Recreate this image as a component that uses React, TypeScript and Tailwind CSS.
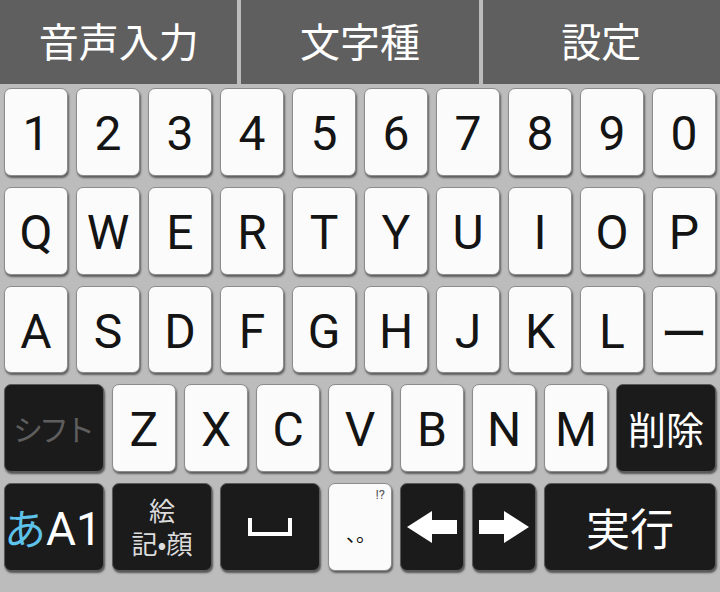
import React from "react";

const CJK = { fontFamily: '"Noto Sans CJK JP", "Noto Sans", sans-serif' };
const ROBO = { fontFamily: 'Roboto, "Noto Sans", sans-serif' };

function Key({
  w,
  dark,
  children,
  className = "",
}: {
  w: string;
  dark?: boolean;
  children?: React.ReactNode;
  className?: string;
}) {
  return (
    <div className={`${w} h-full pl-[4px] pr-[4px] pt-[4px] pb-[7px] shrink-0`}>
      <div
        className={
          "relative w-full h-full rounded-[7px] flex items-center justify-center overflow-hidden " +
          (dark
            ? "bg-[#1b1b1b] border border-[#5a5a5a] shadow-[1px_2px_2px_rgba(0,0,0,0.55)] "
            : "bg-[#fbfbfb] border border-[#8c8c8c] shadow-[1px_2px_2px_rgba(0,0,0,0.5)] ") +
          className
        }
      >
        {children}
      </div>
    </div>
  );
}

function Letter({ c }: { c: string }) {
  return (
    <Key w="w-[72px]">
      <span className="text-[48px] leading-none text-[#141414] mt-[4px]" style={ROBO}>
        {c}
      </span>
    </Key>
  );
}

export default function App() {
  const row1 = "1234567890".split("");
  const row2 = "QWERTYUIOP".split("");
  const row3 = "ASDFGHJKL".split("");
  const row4 = "ZXCVBNM".split("");
  return (
    <div className="w-[720px] h-[592px] bg-[#bcbcbc] flex flex-col overflow-hidden">
      <div className="h-[84px] grid grid-cols-3 gap-[4px] shrink-0">
        {["音声入力", "文字種", "設定"].map((t) => (
          <div
            key={t}
            className="bg-[#5f5f5f] flex items-center justify-center text-white text-[40px] leading-none pb-[4px]"
            style={CJK}
          >
            {t}
          </div>
        ))}
      </div>
      <div className="h-[99px] flex">
        {row1.map((c) => (
          <Letter key={c} c={c} />
        ))}
      </div>
      <div className="h-[99px] flex">
        {row2.map((c) => (
          <Letter key={c} c={c} />
        ))}
      </div>
      <div className="h-[98px] flex">
        {row3.map((c) => (
          <Letter key={c} c={c} />
        ))}
        <Key w="w-[72px]">
          <span className="text-[48px] leading-none text-[#141414]" style={CJK}>
            ー
          </span>
        </Key>
      </div>
      <div className="h-[99px] flex">
        <Key w="w-[108px]" dark>
          <span className="text-[30px] leading-none text-[#5e5e5e] tracking-[-4px] -ml-[4px]" style={CJK}>
            シフト
          </span>
        </Key>
        {row4.map((c) => (
          <Letter key={c} c={c} />
        ))}
        <Key w="w-[108px]" dark>
          <span className="text-[38px] leading-none text-white" style={CJK}>
            削除
          </span>
        </Key>
      </div>
      <div className="h-[99px] flex">
        <Key w="w-[108px]" dark className="!justify-start">
          <span className="text-[42px] leading-none text-[#5ec3ea] -ml-[1px]" style={CJK}>
            あ
          </span>
          <span className="text-[46px] leading-none text-white mt-[4px]" style={ROBO}>
            A1
          </span>
        </Key>
        <Key w="w-[108px]" dark>
          <div className="flex flex-col items-center text-[#dcdcdc] text-[26px] leading-[33px] -mt-[3px]" style={CJK}>
            <span className="leading-[33px]">絵</span>
            <span className="leading-[33px]">記•顔</span>
          </div>
        </Key>
        <Key w="w-[108px]" dark>
          <svg width="44" height="18" viewBox="0 0 44 18">
            <path d="M2 0 V16 H42 V0" fill="none" stroke="white" strokeWidth="4" />
          </svg>
        </Key>
        <Key w="w-[72px]">
          <span className="absolute top-[4px] right-[6px] text-[13px] leading-none text-[#555]" style={ROBO}>
            !?
          </span>
          <span className="text-[20px] leading-none text-[#111] mt-[14px] ml-[2px]" style={CJK}>
            、。
          </span>
        </Key>
        <Key w="w-[72px]" dark>
          <svg width="50" height="32" viewBox="0 0 50 32">
            <path d="M0 16 L25 0 V9 H50 V23 H25 V32 Z" fill="white" />
          </svg>
        </Key>
        <Key w="w-[72px]" dark>
          <svg width="50" height="32" viewBox="0 0 50 32">
            <path d="M50 16 L25 0 V9 H0 V23 H25 V32 Z" fill="white" />
          </svg>
        </Key>
        <Key w="w-[180px]" dark>
          <span className="text-[44px] leading-none text-white" style={CJK}>
            実行
          </span>
        </Key>
      </div>
    </div>
  );
}
